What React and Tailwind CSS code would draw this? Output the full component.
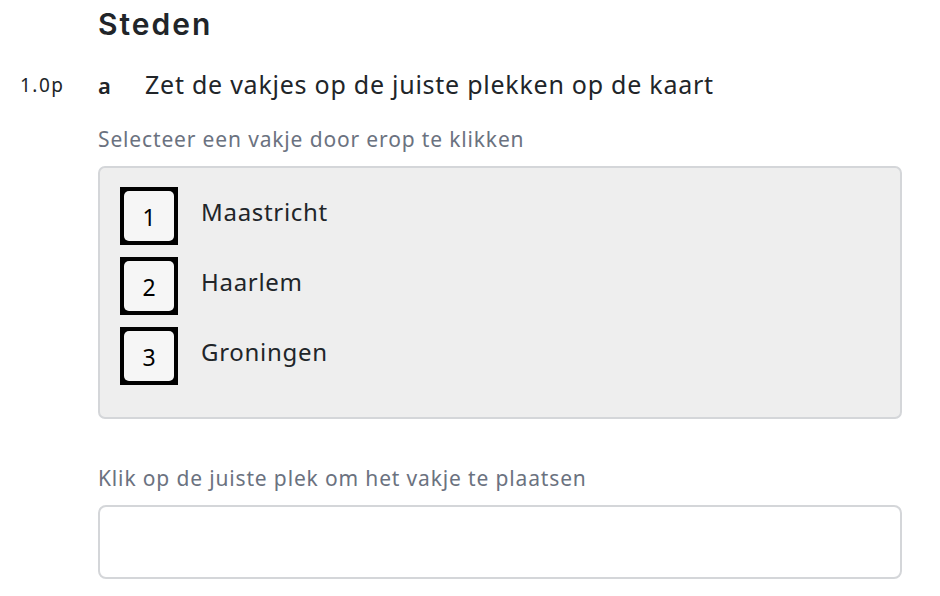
import React from "react";

const cities = [
  { n: "1", name: "Maastricht" },
  { n: "2", name: "Haarlem" },
  { n: "3", name: "Groningen" },
];

const Tile = ({ n }) => (
  <div className="w-[58px] h-[58px] bg-black p-[4px] shrink-0">
    <div className="w-full h-full rounded-[5px] bg-[#f6f6f6] flex items-center justify-center text-[23px] text-black leading-none pt-[2px]">
      {n}
    </div>
  </div>
);

export default function App() {
  return (
    <div
      className="w-[940px] h-[596px] bg-white overflow-hidden text-[#212529]"
      style={{ fontFamily: '"Noto Sans", sans-serif' }}
    >
      <div className="pl-[98px] pt-[4px]">
        <h1
          className="text-[30px] font-semibold leading-[40px] tracking-[2px]"
          style={{ fontFamily: "Inter, sans-serif" }}
        >
          Steden
        </h1>
      </div>

      <div className="flex items-center mt-[24px] h-[34px]">
        <div className="w-[98px] pl-[20px] text-[19px] tracking-[1.5px]">1.0p</div>
        <div className="w-[47px] text-[22px] font-semibold">a</div>
        <div className="text-[25px] tracking-[0.75px]">Zet de vakjes op de juiste plekken op de kaart</div>
      </div>

      <div className="pl-[98px] pr-[38px]">
        <div className="mt-[23px] text-[21px] text-[#6b7280] leading-[28px] tracking-[0.85px]">
          Selecteer een vakje door erop te klikken
        </div>

        <div className="mt-[13px] h-[253px] border-2 border-[#d4d6d9] rounded-[7px] bg-[#eeeeee] pl-[20px] pt-[19px] flex flex-col gap-[12px]">
          {cities.map((c) => (
            <div key={c.n} className="flex items-start gap-[23px]">
              <Tile n={c.n} />
              <div className="text-[24px] leading-[32px] mt-[9px] tracking-[0.7px]">{c.name}</div>
            </div>
          ))}
        </div>

        <div className="mt-[45px] text-[21px] text-[#6b7280] leading-[28px] tracking-[0.85px]">
          Klik op de juiste plek om het vakje te plaatsen
        </div>

        <div className="mt-[13px] h-[74px] border-2 border-[#d4d6d9] rounded-[8px] bg-white" />
      </div>
    </div>
  );
}
